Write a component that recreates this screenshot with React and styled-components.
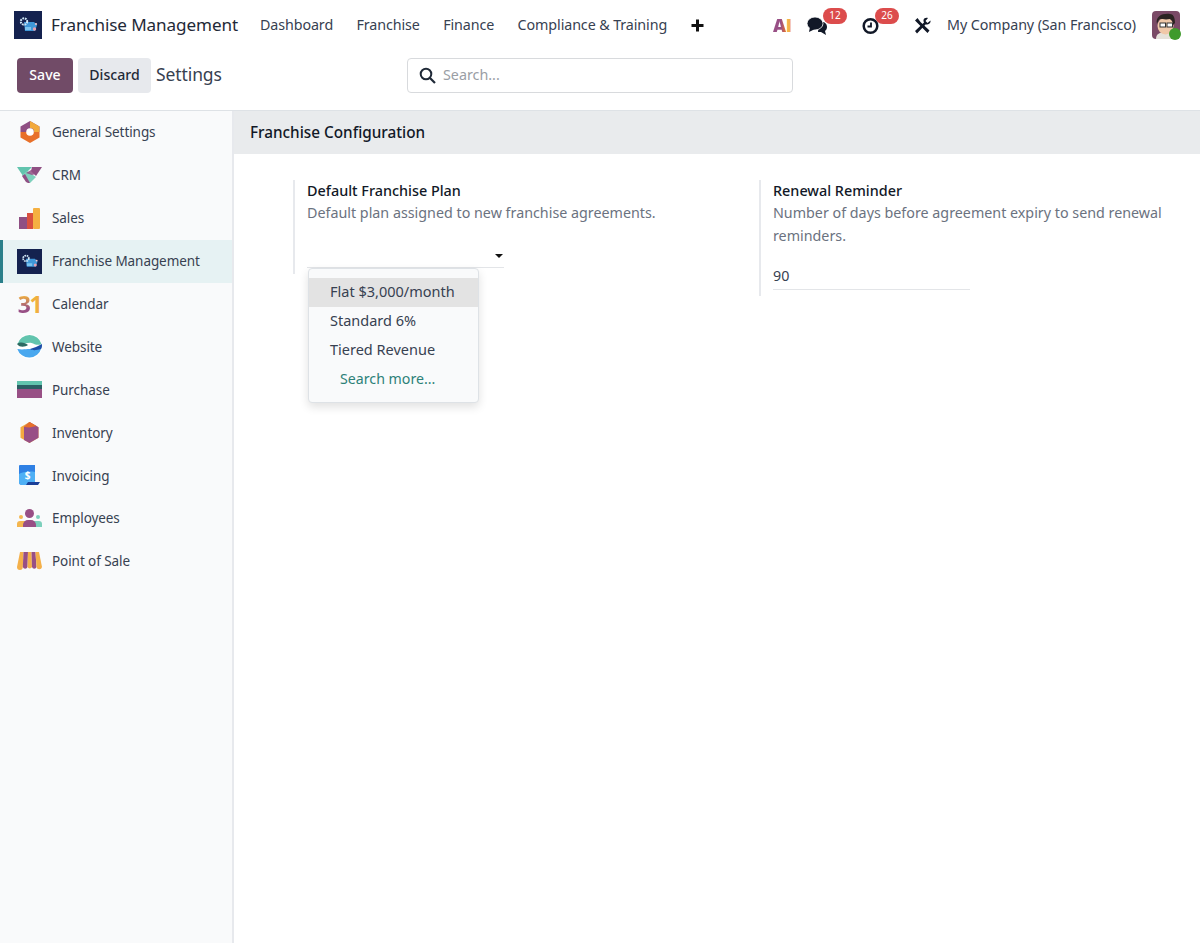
import React from "react";
import styled, { createGlobalStyle } from "styled-components";

const Global = createGlobalStyle`
  html, body { margin: 0; padding: 0; background: #fff; }
  body { font-family: "Noto Sans", "Open Sans", sans-serif; color: #374151; font-size: 14px; }
  * { box-sizing: border-box; }
`;

const Page = styled.div`
  width: 1200px; height: 943px; display: flex; flex-direction: column; overflow: hidden; background: #fff;
`;
const NavBar = styled.header`
  height: 50px; display: flex; align-items: center; padding: 0 14px; flex: none;
`;
const BrandMark = styled.div`
  width: 28px; height: 28px; flex: none; display: flex;
`;
const NavText = styled.span`
  white-space: nowrap; letter-spacing: -.1px; padding-bottom: 2px;
`;
const BrandName = styled(NavText)`
  font-size: 17.1px; margin-left: 9px; color: #1f2937;
`;
const NavMenu = styled.nav`
  display: flex; align-items: center; gap: 23.4px; margin-left: 22px;
`;
const NavLink = styled(NavText)`
  font-size: 14.3px; color: #374151;
`;
const NavTools = styled.div`
  margin-left: auto; display: flex; align-items: center;
`;
const ToolIcon = styled.div`
  position: relative; display: flex; width: ${p => p.$w || 20}px; height: 20px; margin-left: ${p => p.$ml || 0}px;
`;
const Badge = styled.span`
  position: absolute; top: -7px; left: ${p => p.$left}px; height: 16px; width: 24px; border-radius: 8px;
  background: #dc4c4c; color: #fff; font-size: 10px; line-height: 15px; text-align: center;
`;
const AiMark = styled.span`
  display: flex; padding-left: 1px; font: 800 18px/20px "Open Sans", sans-serif; letter-spacing: -.4px; color: #f4b04a;
`;
const AiLetter = styled.span`
  background: linear-gradient(90deg, #984f85 0 60%, #e8702a 100%);
  -webkit-background-clip: text; background-clip: text; color: transparent;
`;
const CalendarMark = styled.span`
  display: flex; font: 700 23px/24px "Open Sans", sans-serif; letter-spacing: -1.5px; color: #f0b03f;
`;
const CalendarThree = styled.span`
  background: linear-gradient(180deg, #f0b03f 15%, #984f85 70%);
  -webkit-background-clip: text; background-clip: text; color: transparent;
`;
const Company = styled(NavText)`
  font-size: 14.3px; color: #374151; margin-left: 16px;
`;
const Avatar = styled.div`
  position: relative; width: 28px; height: 28px; margin-left: 16px; margin-right: 6px; display: flex;
`;
const Presence = styled.span`
  position: absolute; right: -1px; bottom: -1px; width: 12px; height: 12px; border-radius: 50%; background: #3f9a2c;
`;
const ControlPanel = styled.div`
  height: 61px; flex: none; display: flex; align-items: flex-start; padding: 8px 17px 0; border-bottom: 1px solid #dee2e6;
  position: relative;
`;
const Btn = styled.button`
  height: 35px; border: 0; border-radius: 4px; font: 500 14.1px "Noto Sans", sans-serif; padding: 0 0 2px;
  width: ${p => p.$w}px; margin-right: ${p => p.$mr || 0}px;
  background: ${p => p.$primary ? "#714b67" : "#e7e9ed"}; color: ${p => p.$primary ? "#fff" : "#1f2937"};
`;
const PageTitle = styled.span`
  font-size: 17.5px; line-height: 33px; color: #374151; margin-left: 5px; letter-spacing: -.1px;
`;
const SearchBox = styled.div`
  position: absolute; left: 407px; top: 8px; width: 386px; height: 35px; border: 1px solid #d8dadd; border-radius: 4px;
  display: flex; align-items: center; padding: 0 0 0 11px; gap: 7px; color: #9a9ea5; font-size: 14.3px;
`;
const SearchHint = styled.span`
  padding-bottom: 2px;
`;
const Body = styled.div`
  flex: 1; display: flex; min-height: 0;
`;
const Sidebar = styled.aside`
  width: 234px; flex: none; background: #f9fafb; border-right: 2px solid #e7e9ed; display: flex; flex-direction: column;
`;
const SideItem = styled.div`
  height: 42.9px; display: flex; align-items: center; gap: 10px; padding-left: ${p => p.$active ? 14 : 17}px;
  background: ${p => p.$active ? "#e6f2f3" : "transparent"};
  border-left: ${p => p.$active ? "3px solid #2a7f8a" : "0"};
  font-size: 13.5px; color: #374151; letter-spacing: -.07px;
`;
const SideIcon = styled.div`
  width: 25px; height: 25px; flex: none; display: flex; align-items: center; justify-content: center;
`;
const Main = styled.main`
  flex: 1; min-width: 0; position: relative;
`;
const SectionHead = styled.h2`
  margin: 0; height: 43px; background: #e9ebed; padding-left: 16px; font-size: 15.3px; font-weight: 500; line-height: 42px; color: #111827;
`;
const Settings = styled.div`
  display: grid; grid-template-columns: 466px 1fr; padding: 26px 0 0 59px; align-items: start;
`;
const Setting = styled.div`
  border-left: 2px solid #e7e9ed; padding-left: 12px;
`;
const Label = styled.div`
  font-size: 14.4px; font-weight: 500; color: #111827; line-height: 21px;
`;
const Help = styled.div`
  font-size: 14.3px; color: #6b7280; line-height: 23px; padding-right: 20px;
`;
const SelectField = styled.div`
  width: 197px; height: 24px; margin-top: 20px; margin-bottom: 6px; border-bottom: 1px solid #e3e5e8; position: relative;
  &::after {
    content: ""; position: absolute; right: 1px; top: 10px; border: 4px solid transparent; border-top-color: #111; border-bottom: 0;
  }
`;
const NumberField = styled.div`
  width: 197px; height: 25px; margin-top: 18px; margin-bottom: 6px; border-bottom: 1px solid #e3e5e8; font-size: 14.3px; line-height: 22px; color: #374151;
`;
const Menu = styled.ul`
  position: absolute; left: 74px; top: 157px; width: 171px; height: 135px; margin: 0; padding: 9px 0 0; list-style: none;
  background: #f9fafb; border: 1px solid #dee2e6; border-radius: 4px; box-shadow: 0 4px 10px rgba(0,0,0,.12);
`;
const MenuItem = styled.li`
  height: 29px; line-height: 27px; font-size: ${p => p.$more ? 14.2 : 14.5}px; padding-left: ${p => p.$more ? 31 : 21}px;
  background: ${p => p.$hot ? "#e3e3e3" : "transparent"};
  color: ${p => p.$more ? "#2d8178" : "#374151"};
`;

const FranchiseIcon = ({ s = 28 }) => (
  <svg width={s} height={s} viewBox="0 0 28 28">
    <rect width="28" height="28" fill="#14224f" />
    <path d="M10 11h10l3 3-2 6H11z" fill="#3f97d8" />
    <circle cx="10" cy="10.500" r="3.200" fill="none" stroke="#cfe6f5" strokeWidth="2" strokeDasharray="1.800 .8" />
    <rect x="11" y="16" width="6" height="3" fill="#7cc3ee" />
    <circle cx="20.500" cy="18" r="1.700" fill="#e8a0b0" />
    <circle cx="22" cy="13" r="1.100" fill="#f2c6cf" />
  </svg>
);
const General = () => (
  <svg width="20" height="22" viewBox="0 0 20 22">
    <path d="M10 0l9.500 5.500v5.500h-19V5.500z" fill="#8f4f83" />
    <path d="M10 0l9.500 5.500V11H14a4 4 0 0 0-4-4z" fill="#f2a93b" />
    <path d="M.5 11v5.500L10 22l9.500-5.500V11z" fill="#e8702a" />
    <circle cx="10" cy="11" r="3.800" fill="#fff" />
  </svg>
);
const Crm = () => (
  <svg width="25" height="16" viewBox="0 0 25 16">
    <path d="M0 0h9l6 0-9 9z" fill="#62c4ae" />
    <path d="M15 0h10l-6 9-5-5z" fill="#8f4f83" />
    <path d="M5 8l5-4 9 6-6 6z" fill="#7dd0bc" />
    <path d="M5 9l3-2 5 9-2 0-2-1z" fill="#8f4f83" />
    <path d="M9 6l5-3 5 4-4 1z" fill="#8f4f83" opacity=".85" />
  </svg>
);
const Sales = () => (
  <svg width="21" height="21" viewBox="0 0 21 21">
    <rect x="0" y="9" width="8" height="12" fill="#8f4f83" />
    <rect x="8" y="5" width="6" height="16" fill="#d9503f" />
    <rect x="14" y="0" width="7" height="21" rx="1" fill="#f5b041" />
  </svg>
);
const Calendar = () => (
  <CalendarMark><CalendarThree>3</CalendarThree>1</CalendarMark>
);
const Website = () => (
  <svg width="25" height="25" viewBox="0 0 25 25">
    <circle cx="12.500" cy="12.500" r="12.500" fill="#fff" />
    <path d="M0.500 10a12.500 12.500 0 0 1 24 0c-4 2-7 0-10-1-4-1-9 2-14 1z" fill="#62c4ae" />
    <path d="M0 10c4-3 8-1 11 1-3 2-8 3-11-1z" fill="#2d6a62" />
    <path d="M.3 15c5 1 9 0 12 0 4 0 8 0 12 -1A12.500 12.500 0 0 1 .3 15z" fill="#4aa8ef" />
    <path d="M13 15c4-1 8-3 12-5 0 2 0 4-1 5-4 1-8 2-11 0z" fill="#1c4fa8" />
  </svg>
);
const Purchase = () => (
  <svg width="25" height="17" viewBox="0 0 25 17">
    <rect width="25" height="4" fill="#62c4ae" />
    <rect y="4" width="25" height="4" fill="#2b5e63" />
    <rect y="8" width="25" height="9" fill="#984f85" />
  </svg>
);
const Inventory = () => (
  <svg width="19" height="21" viewBox="0 0 19 21">
    <path d="M9.500 0L18.500 5.200v10.600L9.500 21 .5 15.800V5.200z" fill="#f4a93f" />
    <path d="M4 5l5.500-5 9 5.200v10.600L9.500 21 4 18z" fill="#984f85" />
    <path d="M4 5l5.500-5 7 4-7 1.500z" fill="#e8702a" />
  </svg>
);
const Invoicing = () => (
  <svg width="21" height="21" viewBox="0 0 21 21">
    <path d="M0 1a1 1 0 0 1 1-1h15v17a3 3 0 0 1-3 3H3a3 3 0 0 1-3-3z" fill="#2f80e4" />
    <path d="M0 9c3-2 10-3 16-2v10a3 3 0 0 1-3 3H3a3 3 0 0 1-3-3z" fill="#4fb0f5" />
    <path d="M9 17h12l-2 3H7z" fill="#1a3f98" />
    <text x="8.500" y="14" fontSize="10" fontWeight="700" fill="#fff" textAnchor="middle" fontFamily="Noto Sans">$</text>
  </svg>
);
const Employees = () => (
  <svg width="25" height="18" viewBox="0 0 25 18">
    <circle cx="12.500" cy="4.500" r="4.500" fill="#984f85" />
    <circle cx="4" cy="8" r="2" fill="#f4b64f" />
    <circle cx="21" cy="8" r="2" fill="#7dd0bc" />
    <path d="M0 18v-3a3 3 0 0 1 3-3h6v6z" fill="#f4b64f" />
    <path d="M25 18v-3a3 3 0 0 0-3-3h-6v6z" fill="#7dd0bc" />
    <path d="M6 18v-2a5 5 0 0 1 5-5h3a5 5 0 0 1 5 5v2z" fill="#984f85" />
  </svg>
);
const Pos = () => (
  <svg width="25" height="18" viewBox="0 0 25 18">
    <path d="M3 0h3.500L5.800 15a2.900 2.900 0 0 1-5.800 0z" fill="#f4b04a" />
    <path d="M6.500 0h4.500L10.500 15a2.500 2.500 0 0 1-4.700 0z" fill="#984f85" />
    <path d="M11 0H14.500l.5 15a2.500 2.500 0 0 1-4.500 0z" fill="#f4b04a" />
    <path d="M14.500 0H18.500L19.500 15a2.300 2.300 0 0 1-4.500 0z" fill="#984f85" />
    <path d="M18.500 0H22L25 15a2.800 2.800 0 0 1-5.500 0z" fill="#f4b04a" />
  </svg>
);

const apps = [
  ["General Settings", <General />], ["CRM", <Crm />], ["Sales", <Sales />],
  ["Franchise Management", <FranchiseIcon s={25} />, true], ["Calendar", <Calendar />], ["Website", <Website />],
  ["Purchase", <Purchase />], ["Inventory", <Inventory />], ["Invoicing", <Invoicing />],
  ["Employees", <Employees />], ["Point of Sale", <Pos />],
];

export default function App() {
  return (
    <Page>
      <Global />
      <NavBar>
        <BrandMark><FranchiseIcon /></BrandMark>
        <BrandName>Franchise Management</BrandName>
        <NavMenu>
          <NavLink>Dashboard</NavLink>
          <NavLink>Franchise</NavLink>
          <NavLink>Finance</NavLink>
          <NavLink>Compliance &amp; Training</NavLink>
          <svg width="13" height="13" viewBox="0 0 13 13"><path d="M6.500 .5v12M.5 6.500h12" stroke="#111" strokeWidth="3" /></svg>
        </NavMenu>
        <NavTools>
          <ToolIcon $w={22}>
            <AiMark><AiLetter>A</AiLetter>I</AiMark>
          </ToolIcon>
          <ToolIcon $ml={13} $w={20}>
            <svg width="20" height="18" viewBox="0 0 20 18" style={{ marginTop: 2 }}>
              <path d="M12 5h3c3 0 5 2 5 5 0 2-1 3-2 4l1 4-5-3h-3z" fill="#111827" />
              <ellipse cx="8" cy="6.500" rx="8" ry="6.500" fill="#111827" stroke="#fff" strokeWidth=".8" />
              <path d="M3 10l-1 5 6-3z" fill="#111827" />
            </svg>
            <Badge $left={16}>12</Badge>
          </ToolIcon>
          <ToolIcon $ml={35} $w={18}>
            <svg width="18" height="18" viewBox="0 0 18 18" style={{ marginTop: 2 }}>
              <circle cx="8.500" cy="9" r="6.800" fill="none" stroke="#111827" strokeWidth="2.500" />
              <path d="M9 5.500v4H5.500" fill="none" stroke="#111827" strokeWidth="1.800" />
            </svg>
            <Badge $left={13}>26</Badge>
          </ToolIcon>
          <ToolIcon $ml={34} $w={17}>
            <svg width="17" height="17" viewBox="0 0 17 17" style={{ marginTop: 2 }}>
              <path d="M1 3.500L3.500 1l3 4 9 8.500-2 2.500-9-9z" fill="#111827" />
              <path d="M16.500 3.500l-3 2.500-2-2 2.500-3c-2-.8-4 0-4.500 2 0 1 0 1.500.5 2.500L1 14l2 2.500 8.500-9c2.500.5 5.500-1 5-4z" fill="#111827" />
            </svg>
          </ToolIcon>
          <Company>My Company (San Francisco)</Company>
          <Avatar>
            <svg width="28" height="28" viewBox="0 0 28 28">
              <rect width="28" height="28" rx="4" fill="#7a4a66" />
              <path d="M4 28c0-5 4-7 9-7s9 2 9 7z" fill="#e6e2da" />
              <ellipse cx="13.500" cy="15" rx="8" ry="8.500" fill="#f0c8a8" />
              <path d="M5 13C3 5 11 2 18 3c3 0 5 3 5 9l-2 2c0-3-1-5-3-6-4 1-8 0-10 0-2 1-2 3-3 5z" fill="#2b2422" />
              <rect x="8" y="12" width="5.500" height="4" fill="#fff" stroke="#333" />
              <rect x="15" y="12" width="5.500" height="4" fill="#fff" stroke="#333" />
            </svg>
            <Presence />
          </Avatar>
        </NavTools>
      </NavBar>
      <ControlPanel>
        <Btn $primary $w={56} $mr={5}>Save</Btn>
        <Btn $w={73}>Discard</Btn>
        <PageTitle>Settings</PageTitle>
        <SearchBox>
          <svg width="17" height="17" viewBox="0 0 17 17"><circle cx="7" cy="7" r="5.300" fill="none" stroke="#1f2937" strokeWidth="2" /><path d="M11 11l5 5" stroke="#1f2937" strokeWidth="2.200" /></svg>
          <SearchHint>Search...</SearchHint>
        </SearchBox>
      </ControlPanel>
      <Body>
        <Sidebar>
          {apps.map(([name, icon, active]) => (
            <SideItem key={name} $active={active}>
              <SideIcon>{icon}</SideIcon>
              <span>{name}</span>
            </SideItem>
          ))}
        </Sidebar>
        <Main>
          <SectionHead>Franchise Configuration</SectionHead>
          <Settings>
            <Setting>
              <Label>Default Franchise Plan</Label>
              <Help>Default plan assigned to new franchise agreements.</Help>
              <SelectField />
            </Setting>
            <Setting>
              <Label>Renewal Reminder</Label>
              <Help>Number of days before agreement expiry to send renewal reminders.</Help>
              <NumberField>90</NumberField>
            </Setting>
          </Settings>
          <Menu>
            <MenuItem $hot>Flat $3,000/month</MenuItem>
            <MenuItem>Standard 6%</MenuItem>
            <MenuItem>Tiered Revenue</MenuItem>
            <MenuItem $more>Search more...</MenuItem>
          </Menu>
        </Main>
      </Body>
    </Page>
  );
}
